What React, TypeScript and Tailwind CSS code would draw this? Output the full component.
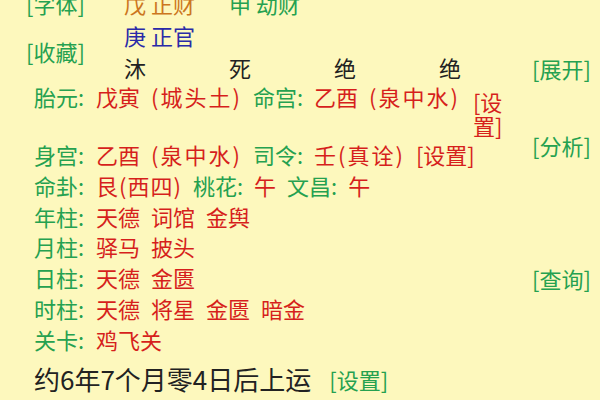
import React from "react";

const green = "text-[#25a150]";
const red = "text-[#d61f1c]";

interface RowProps {
    label: string;
    children: React.ReactNode;
    className?: string;
}

const Row: React.FC<RowProps> = ({ label, children, className }) => {
    return (
        <div className={`flex items-start leading-[30.8px] ${className ?? ""}`}>
            <span className={`w-[62px] shrink-0 ${green}`}>{label}</span>
            <div className={`flex items-start gap-[11px] ${red}`}>{children}</div>
        </div>
    );
};

export default function App() {
    return (
        <div className="flex w-[600px] h-[400px] overflow-hidden bg-[#fdf8bd] text-[22px] font-['Noto_Sans_CJK_SC',sans-serif] text-[#222]">
            {/* 左侧主体 */}
            <div className="flex flex-col w-[532px] shrink-0">
                {/* 顶部: 藏干 / 十神 / 长生 */}
                <div className="flex -mt-[13px] leading-[32px]">
                    <div className={`flex flex-col w-[124px] shrink-0 pl-[26px] ${green}`}>
                        <span className="h-[32px]">[字体]</span>
                        <span className="h-[64px] flex items-center">[收藏]</span>
                    </div>
                    <div className="grid flex-1 grid-cols-[105px_105px_105px_1fr]">
                        <span className="text-[#cc7620]">戊 正财</span>
                        <span className={green}>申 劫财</span>
                        <span></span>
                        <span></span>
                        <span className="text-[#2a2aa8]">庚 正官</span>
                        <span></span>
                        <span></span>
                        <span></span>
                        <span>沐</span>
                        <span>死</span>
                        <span>绝</span>
                        <span>绝</span>
                    </div>
                </div>

                {/* 神煞 */}
                <div className="flex flex-col pl-[34px]">
                    <div className="flex items-start leading-[27px]">
                        <span className={`w-[62px] shrink-0 ${green}`}>胎元:</span>
                        <div className={`flex items-start gap-[11px] ${red}`}>
                            <span>戊寅</span>
                            <span className="tracking-[2px]">(城头土)</span>
                            <span className={green}>命宫:</span>
                            <span>乙酉</span>
                            <span className="tracking-[2px]">(泉中水)</span>
                            <span className="w-[32px] pt-[6px] leading-[24px] break-all ml-[2px]">[设置]</span>
                        </div>
                    </div>
                    <Row label="身宫:" className="mt-[2px]">
                        <span>乙酉</span>
                        <span className="tracking-[2px]">(泉中水)</span>
                        <span className={green}>司令:</span>
                        <span className="tracking-[2px]">壬(真诠)</span>
                        <span>[设置]</span>
                    </Row>
                    <Row label="命卦:">
                        <span className="tracking-[1px]">艮(西四)</span>
                        <span className={green}>桃花:</span>
                        <span>午</span>
                        <span className={green}>文昌:</span>
                        <span>午</span>
                    </Row>
                    <Row label="年柱:">
                        <span>天德</span>
                        <span>词馆</span>
                        <span>金舆</span>
                    </Row>
                    <Row label="月柱:">
                        <span>驿马</span>
                        <span>披头</span>
                    </Row>
                    <Row label="日柱:">
                        <span>天德</span>
                        <span>金匮</span>
                    </Row>
                    <Row label="时柱:">
                        <span>天德</span>
                        <span>将星</span>
                        <span>金匮</span>
                        <span>暗金</span>
                    </Row>
                    <Row label="关卡:">
                        <span>鸡飞关</span>
                    </Row>
                    <div className="flex items-center gap-[18px] mt-[6px] leading-[36px]">
                        <span className="text-[26px]">约6年7个月零4日后上运</span>
                        <span className={green}>[设置]</span>
                    </div>
                </div>
            </div>

            {/* 右侧按钮 */}
            <div className={`flex flex-col w-[68px] leading-[30px] ${green}`}>
                <span className="mt-[53px]">[展开]</span>
                <span className="mt-[47px]">[分析]</span>
                <span className="mt-[103px]">[查询]</span>
            </div>
        </div>
    );
}
